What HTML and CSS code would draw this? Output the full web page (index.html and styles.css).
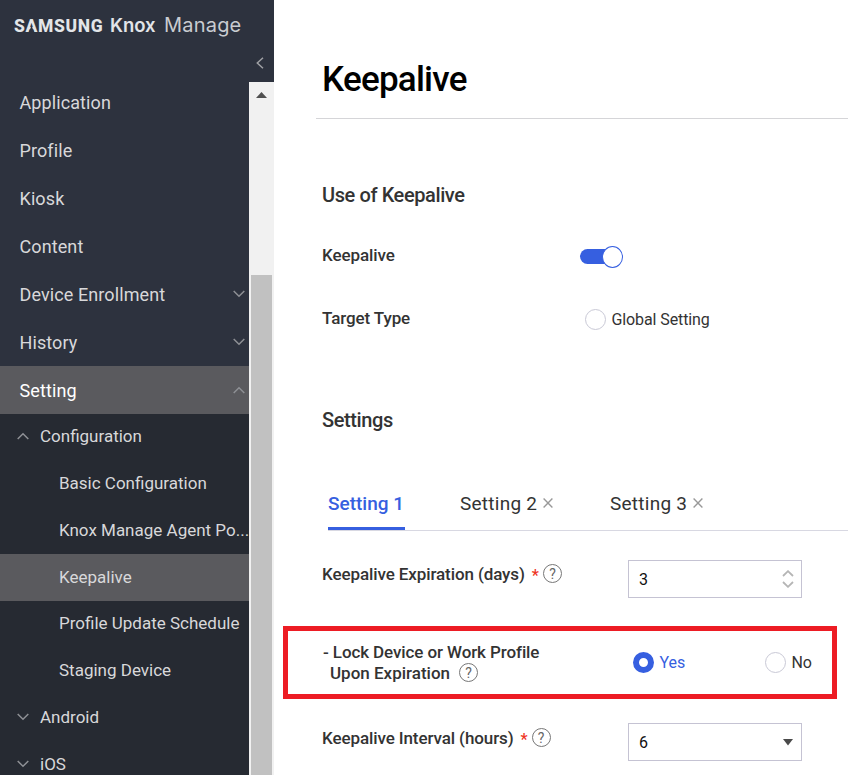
FILE: index.html
```html
<!DOCTYPE html>
<html lang="en">
<head>
<meta charset="utf-8">
<title>Knox Manage - Keepalive</title>
<link rel="stylesheet" href="styles.css">
</head>
<body>
<div class="app">
  <aside class="sidebar">
    <header class="brand">
      <div class="logo"><span class="samsung">S<span class="bare-a">A</span>MSUNG</span><span class="knox">Knox</span><span class="manage">Manage</span></div>
      <svg class="collapse" width="8" height="12" viewBox="0 0 8 12"><path d="M7 .8 1.3 6 7 11.2"/></svg>
    </header>
    <div class="sidebar-body">
      <nav class="nav">
        <a class="item"><span>Application</span></a>
        <a class="item"><span>Profile</span></a>
        <a class="item"><span>Kiosk</span></a>
        <a class="item"><span>Content</span></a>
        <a class="item"><span>Device Enrollment</span><svg class="chev" width="12" height="8" viewBox="0 0 12 8"><path d="M.7 1 6 6.3 11.3 1"/></svg></a>
        <a class="item"><span>History</span><svg class="chev" width="12" height="8" viewBox="0 0 12 8"><path d="M.7 1 6 6.3 11.3 1"/></svg></a>
        <a class="item open"><span>Setting</span><svg class="chev" width="12" height="8" viewBox="0 0 12 8"><path d="M.7 7 6 1.7 11.3 7"/></svg></a>
        <div class="sub">
          <a class="group"><svg class="chev" width="12" height="8" viewBox="0 0 12 8"><path d="M.7 7 6 1.7 11.3 7"/></svg><span>Configuration</span></a>
          <a class="leaf"><span>Basic Configuration</span></a>
          <a class="leaf"><span>Knox Manage Agent Po...</span></a>
          <a class="leaf current"><span>Keepalive</span></a>
          <a class="leaf"><span>Profile Update Schedule</span></a>
          <a class="leaf"><span>Staging Device</span></a>
          <a class="group"><svg class="chev" width="12" height="8" viewBox="0 0 12 8"><path d="M.7 1 6 6.3 11.3 1"/></svg><span>Android</span></a>
          <a class="group"><svg class="chev" width="12" height="8" viewBox="0 0 12 8"><path d="M.7 1 6 6.3 11.3 1"/></svg><span>iOS</span></a>
        </div>
      </nav>
      <div class="scrollbar">
        <svg class="arrow" width="11" height="6" viewBox="0 0 11 6"><path d="M0 6 5.5 0 11 6z"/></svg>
        <div class="thumb"></div>
      </div>
    </div>
  </aside>

  <main class="main">
    <h1>Keepalive</h1>
    <h2 class="use">Use of Keepalive</h2>
    <div class="row row-toggle">
      <span class="label">Keepalive</span>
      <span class="toggle"><span class="knob"></span></span>
    </div>
    <div class="row row-target">
      <span class="label">Target Type</span>
      <span class="choice"><span class="radio"></span><span>Global Setting</span></span>
    </div>
    <h2 class="settings">Settings</h2>
    <div class="tabs">
      <span class="tab active">Setting 1</span>
      <span class="tab second">Setting 2<svg class="close" width="10" height="10" viewBox="0 0 10 10"><path d="M.6.6 9.4 9.4M9.4.6.6 9.4"/></svg></span>
      <span class="tab third">Setting 3<svg class="close" width="10" height="10" viewBox="0 0 10 10"><path d="M.6.6 9.4 9.4M9.4.6.6 9.4"/></svg></span>
    </div>
    <div class="row row-days">
      <span class="label">Keepalive Expiration (days)<span class="star">*</span><span class="help">?</span></span>
      <span class="field"><span>3</span><svg class="spin" width="12" height="18" viewBox="0 0 12 18"><path d="M1 6 6 1.2 11 6M1 12 6 16.8 11 12"/></svg></span>
    </div>
    <div class="highlight">
      <div class="label lock"><div>- Lock Device or Work Profile</div><div class="line2">Upon Expiration<span class="help">?</span></div></div>
      <span class="choice yes"><span class="radio checked"></span><span>Yes</span></span>
      <span class="choice no"><span class="radio"></span><span>No</span></span>
    </div>
    <div class="row row-hours">
      <span class="label">Keepalive Interval (hours)<span class="star">*</span><span class="help">?</span></span>
      <span class="field"><span>6</span><svg class="caret" width="10" height="7" viewBox="0 0 10 7"><path d="M0 0H10L5 6.5z"/></svg></span>
    </div>
  </main>
</div>
</body>
</html>
```
FILE: styles.css
```css
* { box-sizing: border-box; }
body { margin: 0; background: #fff; font-family: Roboto, "Liberation Sans", sans-serif; color: #333; }
svg { display: block; flex: none; fill: none; }
.app { display: flex; width: 848px; height: 775px; overflow: hidden; white-space: nowrap; }

/* Sidebar */
.sidebar { flex: none; width: 274px; height: 775px; background: #2d323e; overflow: hidden; }
.brand { height: 82px; padding: 9px 10px 0 14px; }
.logo { display: flex; align-items: baseline; height: 32px; line-height: 32px; color: #e3e5e8; }
.samsung { width: 96px; font: 800 17.5px/31px Roboto, sans-serif; letter-spacing: .65px; }
.bare-a { position: relative; }
.bare-a::after { content: ""; position: absolute; left: 3px; bottom: 3px; width: 6px; height: 6px; background: #2d323e; clip-path: polygon(40% 0, 60% 0, 96% 100%, 4% 100%); }
.knox { width: 54px; font: 600 18.5px/32px Inter, sans-serif; letter-spacing: -.1px; }
.manage { font: 400 20px/32px Inter, sans-serif; color: #c9ccd1; letter-spacing: .2px; }
.collapse { margin: 16px 0 0 auto; stroke: #a0a1a5; stroke-width: 1.5; }
.sidebar-body { display: flex; height: 693px; }
.nav { width: 249px; margin-top: -4px; color: #d8d8da; }
.item { display: flex; align-items: center; justify-content: space-between; height: 48px; padding: 0 4px 0 19.5px; font-size: 18px; letter-spacing: .1px; }
.chev { stroke: #8e9095; stroke-width: 1.5; }
.item.open { background: #5a5a5e; color: #fff; }
.sub { background: #262a32; }
.group, .leaf { display: flex; align-items: center; height: 46.75px; font-size: 17px; padding-bottom: 2px; }
.group { padding-left: 16.5px; gap: 11.5px; }
.leaf { padding-left: 59px; }
.current { background: #5a5a5e; }
.scrollbar { display: flex; flex-direction: column; align-items: center; width: 25px; background: #f1f1f1; }
.arrow { margin-top: 10px; fill: #505050; }
.thumb { width: 21px; margin-top: 177px; flex: 1; background: #c1c1c1; }

/* Content */
.main { flex: 1; padding-left: 9px; }
h1 { height: 119px; margin: 0 0 0 33px; padding: 59px 0 0 6px; border-bottom: 1px solid #d5d5d8; color: #000; font-size: 35px; font-weight: 500; line-height: 42px; letter-spacing: -.75px; }
h2 { margin: 0 0 0 39px; font-size: 20px; font-weight: 500; line-height: 24px; color: #333; letter-spacing: -.4px; }
.use { margin-top: 64px; }
.settings { margin-top: 78px; }
.row { display: flex; margin-left: 39px; }
.label { flex: none; display: flex; align-items: center; font-size: 17px; font-weight: 500; line-height: 22px; color: #333; letter-spacing: -.1px; }
.row-toggle { height: 22px; margin-top: 39px; }
.row-toggle .label { width: 258px; height: 18px; }
.toggle { position: relative; width: 43px; height: 15px; margin-top: 3px; border-radius: 8px; background: linear-gradient(90deg, #365fe0 34px, transparent 34px); }
.knob { position: absolute; right: 0; top: -3px; width: 21px; height: 22px; border: 1px solid #365fe0; border-radius: 50%; background: #fff; }
.row-target { height: 22px; margin-top: 40px; }
.row-target .label { width: 263px; height: 20px; }
.choice { display: flex; align-items: center; height: 22px; gap: 5.5px; font-size: 16px; color: #333; letter-spacing: -.1px; }
.radio { flex: none; width: 21px; height: 21px; border: 1px solid #c9c9d6; border-radius: 50%; background: #fff; }
.radio.checked { border: 6px solid #365fe0; }
.tabs { display: flex; height: 53px; margin: 46px 0 0 45px; border-bottom: 1px solid #d8d8e2; padding-bottom: 1px; }
.tab { display: flex; align-items: center; height: 51px; padding-bottom: 1px; font-size: 19px; letter-spacing: .25px; }
.tab.active { width: 77px; height: 52px; border-bottom: 3px solid #365fe0; color: #365fe0; font-weight: 500; padding: 1px 0 0; letter-spacing: 0; }
.second { width: 150px; margin-left: 55px; }
.close { margin-left: 6px; stroke: #999; stroke-width: 1.4; }
.row-days { margin-top: 29px; height: 38px; }
.row-days .label, .row-hours .label { width: 306px; height: 29px; }
.row-days .label { height: 27px; }
.star { margin: 4px 0 0 7px; color: #ee3524; font-size: 16px; line-height: 18px; letter-spacing: 0; }
.help { display: flex; align-items: center; justify-content: center; width: 19px; height: 19px; margin-left: 4px; border: 1.5px solid #777; border-radius: 50%; color: #666; font-size: 14px; font-weight: 400; line-height: 16px; letter-spacing: 0; }
.row-days .help { margin-top: 0; }
.field { display: flex; align-items: center; justify-content: space-between; width: 174px; height: 38px; border: 1px solid #c5c3d3; padding: 0 7px 0 10px; color: #111; font-size: 16px; }
.spin { stroke: #b5b5b5; stroke-width: 1.8; }
.caret { margin-right: 1px; fill: #4a4a4a; }
.highlight { display: flex; align-items: flex-start; width: 554px; height: 73px; margin-top: 28px; border: 5px solid #ed1c24; padding: 11px 0 0 35px; }
.lock { display: block; width: 310px; line-height: 21px; }
.line2 { display: flex; align-items: center; padding-left: 7px; letter-spacing: 0; }
.line2 .help { margin-left: 9px; margin-top: -2px; }
.highlight .choice { margin-top: 9px; }
.yes { width: 132px; }
.highlight .yes { color: #365fe0; }
.row-hours { margin-top: 24px; }
```
